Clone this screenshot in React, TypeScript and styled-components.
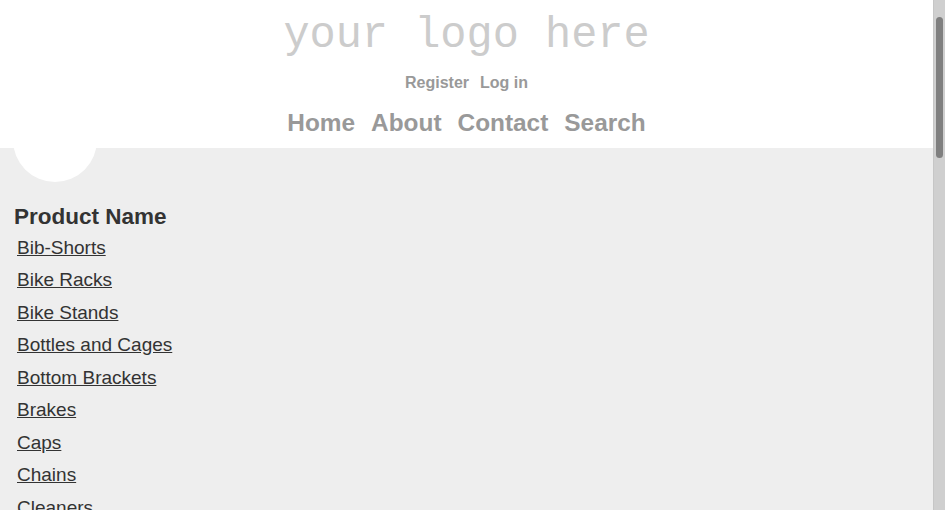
import React from "react";
import styled, { createGlobalStyle } from "styled-components";

const GlobalStyle = createGlobalStyle`
  html, body {
    margin: 0;
    padding: 0;
  }
  html {
    scrollbar-width: none;
  }
  ::-webkit-scrollbar {
    display: none;
  }
  body {
    background: #eeeeee;
    font-family: "Liberation Sans", Arial, sans-serif;
    color: #333333;
  }
`;

const Page = styled.div`
  margin-right: 12px;
`;

const ScrollTrack = styled.div`
  position: fixed;
  top: 0;
  right: 0;
  bottom: 0;
  width: 12px;
  box-sizing: border-box;
  background: #cfcfcf;
  border-left: 1px solid #c6c6c6;
  z-index: 10;
`;

const ScrollThumb = styled.div`
  position: absolute;
  top: 17px;
  left: 2px;
  width: 7px;
  height: 141px;
  border-radius: 4px;
  background: #7f7f7f;
`;

const Header = styled.header`
  position: relative;
  z-index: 1;
  background: #ffffff;
  display: flex;
  flex-direction: column;
  align-items: center;
  padding: 11px 0 11px;
`;

const Logo = styled.div`
  font-family: "Liberation Mono", "Courier New", monospace;
  font-size: 43.6px;
  color: #cccccc;
  line-height: normal;
`;

const AccountLinks = styled.div`
  display: flex;
  gap: 11px;
  margin-top: 14px;
`;

const AccountLink = styled.a`
  font-size: 16px;
  font-weight: bold;
  color: #999999;
  text-decoration: none;
  line-height: normal;
`;

const Nav = styled.nav`
  display: flex;
  gap: 16px;
  margin-top: 16.5px;
`;

const NavLink = styled.a`
  font-size: 24.4px;
  font-weight: bold;
  color: #999999;
  text-decoration: none;
  line-height: normal;
`;

const Main = styled.main`
  padding: 0 0 240px 14px;
`;

const Avatar = styled.div`
  width: 84px;
  height: 84px;
  border-radius: 50%;
  background: #ffffff;
  margin-top: -50px;
  margin-left: -1px;
`;

const Heading = styled.h3`
  font-size: 22.5px;
  font-weight: bold;
  color: #333333;
  margin: 22px 0 2px;
  line-height: normal;
`;

const List = styled.div`
  display: flex;
  flex-direction: column;
  align-items: flex-start;
  padding-left: 3px;
`;

const ProductLink = styled.a`
  font-size: 19px;
  line-height: 32.5px;
  color: #333333;
  text-decoration: underline;
`;

const products = [
  "Bib-Shorts",
  "Bike Racks",
  "Bike Stands",
  "Bottles and Cages",
  "Bottom Brackets",
  "Brakes",
  "Caps",
  "Chains",
  "Cleaners",
  "Cranksets",
  "Derailleurs",
  "Fenders",
  "Forks",
  "Gloves",
  "Handlebars",
  "Headsets",
  "Helmets",
  "Hydration Packs",
  "Jerseys",
  "Lights",
  "Locks",
  "Mountain Bikes",
  "Mountain Frames",
  "Panniers",
  "Pedals",
  "Pumps",
  "Road Bikes",
  "Road Frames",
  "Saddles",
  "Shorts",
  "Socks",
  "Tights",
  "Tires and Tubes",
  "Touring Bikes",
  "Touring Frames",
  "Vests",
  "Wheels",
];

export default function App() {
  return (
    <>
      <GlobalStyle />
      <Page>
        <Header>
          <Logo>your logo here</Logo>
          <AccountLinks>
            <AccountLink href="#">Register</AccountLink>
            <AccountLink href="#">Log in</AccountLink>
          </AccountLinks>
          <Nav>
            <NavLink href="#">Home</NavLink>
            <NavLink href="#">About</NavLink>
            <NavLink href="#">Contact</NavLink>
            <NavLink href="#">Search</NavLink>
          </Nav>
        </Header>
        <Main>
          <Avatar />
          <Heading>Product Name</Heading>
          <List>
            {products.map((p) => (
              <ProductLink key={p} href="#">
                {p}
              </ProductLink>
            ))}
          </List>
        </Main>
      </Page>
      <ScrollTrack>
        <ScrollThumb />
      </ScrollTrack>
    </>
  );
}
